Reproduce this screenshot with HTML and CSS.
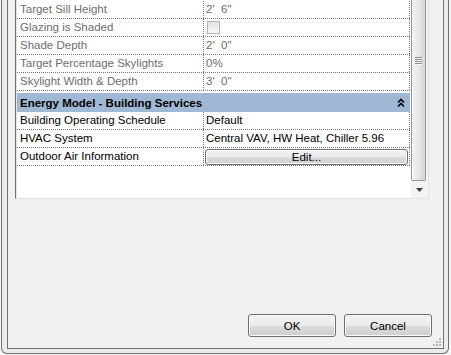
FILE: index.html
```html
<!DOCTYPE html>
<html>
<head>
    <meta name="viewport" content="width=device-width, initial-scale=1.0">
    <title>Type Properties - Energy Settings</title>
    <link rel="stylesheet" href="styles.css">
</head>
<body>
    <div class="frame">
        <div class="client">
            <div class="listbox">
                <div class="grid">
                    <div class="row ro">
                        <div class="name">Target Sill Height</div>
                        <div class="value">2' &nbsp;6"</div>
                    </div>
                    <div class="row ro">
                        <div class="name">Glazing is Shaded</div>
                        <div class="value"><span class="check"></span></div>
                    </div>
                    <div class="row ro">
                        <div class="name">Shade Depth</div>
                        <div class="value">2' &nbsp;0"</div>
                    </div>
                    <div class="row ro">
                        <div class="name">Target Percentage Skylights</div>
                        <div class="value">0%</div>
                    </div>
                    <div class="row ro">
                        <div class="name">Skylight Width &amp; Depth</div>
                        <div class="value">3' &nbsp;0"</div>
                    </div>

                    <div class="group">
                        <span>Energy Model - Building Services</span>
                        <svg class="collapse" width="8" height="10" viewBox="0 0 8 10">
                            <path d="M1 4.5 L4 1.5 L7 4.5 M1 8.5 L4 5.5 L7 8.5" fill="none" stroke="#000" stroke-width="1.6"/>
                        </svg>
                    </div>

                    <div class="row">
                        <div class="name">Building Operating Schedule</div>
                        <div class="value">Default</div>
                    </div>
                    <div class="row">
                        <div class="name">HVAC System</div>
                        <div class="value">Central VAV, HW Heat, Chiller 5.96</div>
                    </div>
                    <div class="row">
                        <div class="name">Outdoor Air Information</div>
                        <div class="value"><button class="edit-btn">Edit...</button></div>
                    </div>
                </div>

                <div class="scrollbar">
                    <div class="thumb"><div class="grip"></div></div>
                    <div class="arrow">
                        <svg width="7" height="4" viewBox="0 0 7 4"><path d="M0 0 H7 L3.5 4 Z" fill="#3d3d3d"/></svg>
                    </div>
                </div>
            </div>

            <div class="actions">
                <button class="btn">OK</button>
                <button class="btn">Cancel</button>
            </div>

            <!-- resize grip in the corner -->
            <svg class="size-grip" width="9" height="9" viewBox="0 0 9 9">
                <g fill="#b8b8b8">
                    <rect x="6" y="0" width="2" height="2"/>
                    <rect x="3" y="3" width="2" height="2"/>
                    <rect x="6" y="3" width="2" height="2"/>
                    <rect x="0" y="6" width="2" height="2"/>
                    <rect x="3" y="6" width="2" height="2"/>
                    <rect x="6" y="6" width="2" height="2"/>
                </g>
            </svg>
        </div>
    </div>
</body>
</html>
```

FILE: styles.css
```css
* {
    box-sizing: border-box;
}
body {
    margin: 0;
    background-color: #f4f4f4;
    font-family: "Liberation Sans", Arial, sans-serif;
    font-size: 11.5px;
    color: #000;
}
.frame {
    margin-left: 1px;
    width: 448px;
    height: 354px;
    border: 1px solid #707070;
    border-top: none;
    border-radius: 0 0 6px 6px;
    background-color: #ebebeb;
    padding: 0 4px 4px 5px;
}
.client {
    position: relative;
    height: 349px;
    border: 1px solid #707070;
    border-top: none;
    background-color: #f0f0f0;
    display: flex;
    flex-direction: column;
    justify-content: space-between;
}
.listbox {
    margin: 0 14px 0 7px;
    height: 199px;
    display: flex;
    gap: 1px;
    background: white;
    border-left: 1px solid #707070;
    border-right: 1px solid #e3e3e3;
    border-bottom: 1px solid #e3e3e3;
    padding-left: 1px;
    box-shadow: inset 1px 0 0 #e3e3e3;
}
.grid {
    width: 393px;
    padding-top: 1px;
}
.row {
    display: flex;
    height: 18px;
    line-height: 17px;
    border-bottom: 1px dotted #777;
}
.name {
    width: 187px;
    padding-left: 3px;
    border-right: 1px dotted #777;
    white-space: nowrap;
}
.value {
    width: 206px;
    padding-left: 2px;
    border-right: 1px dotted #777;
    white-space: nowrap;
}
.ro {
    color: #6d6d6d;
}
.check {
    display: inline-block;
    width: 13px;
    height: 13px;
    margin: 2px 0 0 1px;
    vertical-align: top;
    border: 1px solid #b4b4b4;
    background: linear-gradient(#e2e2e2, #f8f8f8);
}
.group {
    display: flex;
    justify-content: space-between;
    align-items: center;
    height: 19px;
    margin-top: 2px;
    padding: 0 5px 0 3px;
    background-color: #9fb8d3;
    font-weight: bold;
}
.edit-btn {
    display: block;
    width: 203px;
    height: 16px;
    margin: 1px 0 0 -1px;
    padding: 0;
    font: inherit;
    line-height: 14px;
    color: #000;
    border: 1px solid #707070;
    border-radius: 3px;
    background: linear-gradient(#f2f2f2 0%, #ebebeb 50%, #dddddd 51%, #cfcfcf 100%);
    box-shadow: inset 0 0 0 1px #fbfbfb;
}
.scrollbar {
    width: 17px;
    display: flex;
    flex-direction: column;
    background-color: #f3f3f3;
}
.thumb {
    width: 15px;
    height: 181px;
    border: 1px solid #979797;
    border-top: none;
    border-radius: 0 0 2px 2px;
    background: linear-gradient(to right, #f3f3f3 0%, #e8e8e8 50%, #d4d4d4 100%);
    box-shadow: inset 1px 0 0 #fff;
    padding-top: 57px;
}
.grip {
    width: 7px;
    height: 8px;
    margin: 0 auto;
    background: repeating-linear-gradient(#8a8a8a 0 1px, #fafafa 1px 2px);
}
.arrow {
    flex: 1;
    display: flex;
    align-items: center;
    justify-content: center;
}
.actions {
    display: flex;
    justify-content: flex-end;
    gap: 8px;
    padding: 0 11px 11px 0;
}
.btn {
    width: 88px;
    height: 23px;
    padding: 0;
    font: inherit;
    color: #000;
    border: 1px solid #707070;
    border-radius: 3px;
    background: linear-gradient(#f2f2f2 0%, #ebebeb 50%, #dddddd 51%, #cfcfcf 100%);
    box-shadow: inset 0 0 0 1px #fbfbfb;
}
.size-grip {
    position: absolute;
    right: 1px;
    bottom: 1px;
}
```
